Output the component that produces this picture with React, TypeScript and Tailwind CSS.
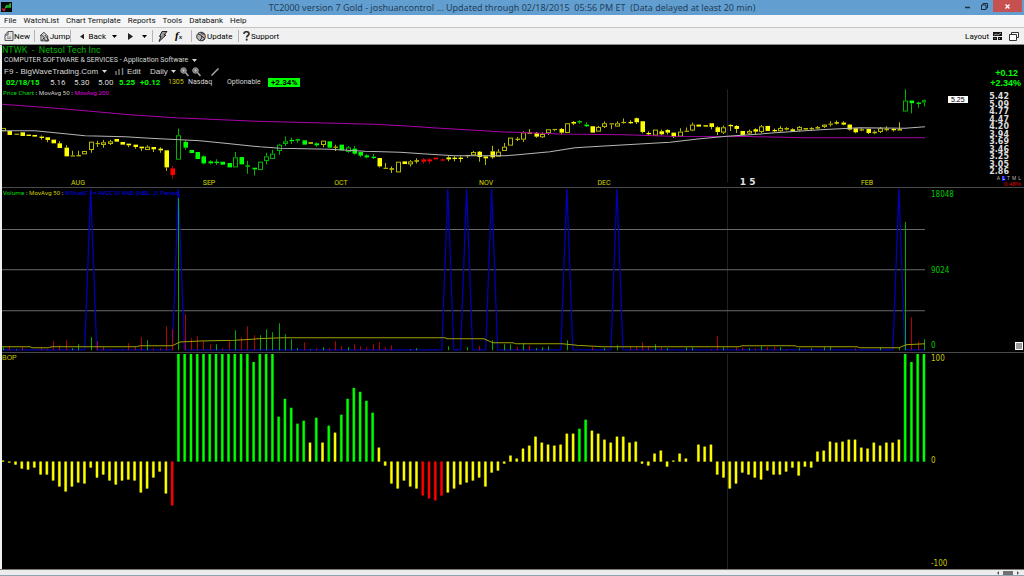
import React from "react";

const STEP = 6.265;
const barX = (i: number) => 3 + i * STEP;

// [kind, body top, body bottom, high, low] in thirds of a pixel; capital letter = filled body
type Candle = [string, number, number, number?, number?];
const candles: Candle[] = [
  ["y", 128, 138], ["Y", 137, 149], ["y", 145, 148], ["Y", 141, 152], ["Y", 148, 152], ["Y", 149, 154],
  ["Y", 154, 158, 151, 163], ["Y", 156, 164, 156, 171], ["Y", 163, 174], ["Y", 174, 188, 168, 188],
  ["Y", 187, 213, 180, 213], ["y", 210, 213, 196, 213], ["y", 209, 213, 196, 213], ["y", 197, 207],
  ["y", 169, 194, 169, 202], ["y", 173, 176, 166, 185], ["y", 171, 179, 164, 187], ["y", 168, 176, 163, 179],
  ["Y", 161, 169], ["Y", 170, 178], ["Y", 175, 180, 175, 186], ["Y", 178, 185, 178, 190], ["Y", 184, 189, 184, 197],
  ["y", 184, 194, 180, 194], ["Y", 185, 192, 185, 200], ["Y", 190, 195, 186, 202], ["Y", 195, 246, 195, 257],
  ["R", 249, 269, 242, 280], ["g", 150, 223, 130, 223], ["G", 170, 187, 165, 193], ["G", 194, 203], ["G", 200, 221],
  ["G", 213, 234, 210, 237], ["G", 228, 234, 225, 237], ["G", 229, 233, 222, 238], ["G", 229, 238], ["G", 233, 246],
  ["g", 216, 246, 200, 246], ["G", 215, 237], ["G", 240, 243, 226, 265], ["G", 247, 252, 247, 270], ["g", 229, 254],
  ["g", 213, 227, 202, 237], ["g", 205, 221, 193, 221], ["g", 178, 197, 175, 208], ["g", 168, 176, 154, 182],
  ["G", 164, 167, 157, 176], ["G", 162, 165, 160, 172], ["G", 165, 178], ["Y", 171, 175], ["G", 174, 180, 171, 184],
  ["y", 166, 179, 166, 186], ["G", 168, 187], ["y", 184, 187, 178, 197], ["G", 178, 195], ["g", 186, 200, 182, 202],
  ["G", 190, 205, 182, 208], ["G", 200, 211, 200, 216], ["G", 210, 216, 206, 219], ["G", 214, 218, 206, 221],
  ["Y", 218, 243, 218, 246], ["y", 247, 249, 233, 251], ["Y", 249, 251, 243, 263], ["y", 229, 261], ["Y", 228, 236],
  ["y", 228, 237, 224, 243], ["Y", 225, 228, 219, 234], ["R", 222, 229, 218, 235], ["R", 222, 228, 218, 234],
  ["R", 217, 222], ["R", 222, 225, 219, 228], ["Y", 216, 222, 210, 228], ["Y", 217, 221, 213, 228], ["Y", 217, 221, 213, 231],
  ["y", 209, 212, 209, 218], ["y", 200, 210, 197, 210], ["Y", 199, 215, 197, 229], ["Y", 213, 219, 213, 239],
  ["Y", 198, 216, 181, 220], ["y", 199, 214, 192, 214], ["y", 184, 197, 173, 197], ["y", 157, 181], ["y", 160, 164, 155, 167],
  ["y", 141, 163, 138, 170], ["y", 141, 146, 132, 146], ["Y", 143, 154, 140, 157], ["y", 146, 156, 141, 158],
  ["y", 132, 144, 132, 149], ["y", 131, 134, 131, 138], ["Y", 131, 142, 128, 148], ["y", 114, 143], ["Y", 110, 115, 108, 120],
  ["G", 108, 111, 105, 116], ["G", 118, 123, 111, 125], ["Y", 123, 142], ["y", 125, 139, 122, 139], ["y", 114, 125, 108, 128],
  ["y", 114, 116, 114, 131], ["y", 114, 124, 108, 124], ["y", 110, 112, 100, 115], ["Y", 110, 114, 105, 116],
  ["Y", 99, 111, 97, 116], ["Y", 108, 140, 108, 144], ["Y", 143, 147, 138, 151], ["y", 133, 151], ["Y", 138, 147, 133, 150],
  ["Y", 134, 142, 132, 148], ["Y", 142, 154, 142, 158], ["y", 139, 154, 129, 154], ["y", 136, 139, 127, 140],
  ["y", 118, 136, 112, 138], ["Y", 118, 124], ["Y", 120, 124], ["Y", 114, 125, 114, 132], ["Y", 126, 140, 123, 149],
  ["y", 126, 142, 121, 146], ["Y", 119, 123, 117, 137], ["Y", 122, 131, 120, 143], ["Y", 137, 149], ["y", 137, 145, 133, 148],
  ["Y", 132, 139, 129, 146], ["y", 123, 140, 119, 143], ["Y", 122, 137], ["Y", 134, 138, 130, 141], ["y", 128, 138, 122, 140],
  ["y", 128, 133, 126, 136], ["Y", 132, 137, 129, 138], ["y", 125, 135, 122, 138], ["Y", 129, 132], ["y", 128, 132, 126, 137],
  ["y", 125, 130, 122, 132], ["y", 118, 125, 116, 128], ["y", 115, 118, 108, 124], ["Y", 111, 115, 106, 118],
  ["Y", 112, 118, 108, 120], ["Y", 118, 133, 116, 136], ["Y", 129, 141, 128, 144], ["y", 132, 136, 129, 138],
  ["Y", 131, 143, 131, 146], ["y", 139, 144, 135, 147], ["y", 129, 140, 125, 143], ["y", 130, 135, 123, 138],
  ["Y", 131, 135, 129, 139], ["y", 131, 136, 111, 136], ["g", 46, 79, 12, 79], ["G", 46, 54, 46, 84], ["G", 52, 56, 50, 68],
  ["g", 45, 52, 43, 63],
];

// Volume bars: index, height, r(ed) or g(reen)
const volumes =
  "0 3 g,1 4 r,2 1 g,3 3 r,6 3 r,7 1 r,8 9 r,9 5 r,10 10 r,11 2 g,12 6 g,14 13 g,15 9 r,16 4 r,17 1 r,19 1 r,20 7 r,21 4 r,22 13 r,23 10 g,24 2 r,25 2 r,26 24 r,27 21 r,28 152 g,29 36 r,30 12 r,31 14 r,32 9 r,33 6 r,34 6 g,35 2 r,36 9 r,37 20 g,38 13 r,39 24 r,40 15 r,41 15 g,42 21 g,43 18 g,44 27 g,45 16 g,46 11 g,47 2 g,48 8 r,49 1 g,50 2 r,51 3 g,52 2 r,53 9 r,54 4 r,55 3 g,56 6 r,57 4 r,58 3 r,59 6 r,60 8 r,61 3 r,62 5 r,65 1 g,66 2 g,71 4 g,74 3 g,76 4 r,78 10 g,80 6 g,81 6 g,82 3 r,83 7 g,84 5 r,85 2 g,86 3 g,87 4 g,90 10 g,94 3 r,96 2 g,98 5 g,100 4 r,101 3 r,102 8 r,103 4 r,104 6 g,105 3 r,106 2 g,109 3 g,110 3 g,113 1 r,114 14 r,115 3 g,117 3 r,118 3 r,119 2 g,120 2 r,121 4 g,122 3 r,123 3 r,124 3 g,125 1 r,127 2 g,129 2 g,131 3 g,132 4 g,136 2 r,140 3 g,143 3 g,144 128 g,145 33 r,146 9 r,147 11 g"
    .split(",")
    .map((s) => s.split(" "));

const bop = [
  1, -1, -3, -7, -8, -6, -13, -13, -19, -25, -30, -25, -21, -22, -6, -16, -13, -19, -23, -19, -18, -19, -31, -27, -16,
  -10, -32, -44, 108, 108, 108, 108, 108, 108, 108, 108, 108, 108, 108, 108, 100, 108, 108, 108, 45, 63, 54, 38, 41, 19,
  44, 19, 36, 29, 47, 63, 74, 70, 61, 49, 14, -4, -22, -27, -19, -25, -27, -34, -37, -39, -34, -31, -27, -23, -21, -19,
  -16, -25, -11, -9, -2, 6, 3, 13, 16, 25, 19, 17, 16, 17, 28, 28, 33, 42, 31, 28, 22, 19, 25, 25, 19, 20, -2, -4, 8, 11,
  -5, 1, 8, 3, 0, 17, 15, 17, -13, -16, -27, -22, -11, -13, -16, -18, -9, -13, -13, -10, -6, -14, -5, -6, 10, 11, 20, 19,
  20, 22, 22, 14, 13, 19, 16, 19, 19, 22, 108, 100, 108, 108,
];
const bopColor = (v: number) => (v >= 32 ? "#00ff00" : v <= -33 ? "#ff0000" : "#ffff00");

const spikes = [14, 28, 71, 74, 78, 90, 98, 143];

const months: [string, number][] = [
  ["AUG", 78], ["SEP", 209], ["OCT", 341], ["NOV", 486], ["DEC", 604], ["FEB", 867],
];

const scale = ["5.42", "5.09", "4.77", "4.47", "4.20", "3.94", "3.69", "3.46", "3.25", "3.05", "2.86"];

function CandleShape({ c, i }: { c: Candle; i: number }) {
  const [kind, t, b, h = t, l = b] = c;
  const x = Math.round(barX(i)) + 0.5;
  const y = (v: number) => 85 + v / 3;
  const k = kind.toLowerCase();
  const solid = kind !== k;
  const bright = k === "y" ? "#ffff00" : k === "g" ? "#00ff00" : "#ff0000";
  const dim = k === "y" ? "#b8b800" : k === "g" ? "#00b400" : "#b40000";
  const top = y(t);
  const height = Math.max(1.2, (b - t) / 3);
  return (
    <g>
      {h < t && <path d={`M${x} ${y(h)}V${top}`} stroke={dim} />}
      {l > b && <path d={`M${x} ${top + height}V${y(l)}`} stroke={dim} />}
      {solid || height < 2 ? (
        <rect x={x - 2} y={top} width="4.5" height={height} fill={solid ? bright : dim} />
      ) : (
        <rect x={x - 2} y={top + 0.5} width="4" height={height - 1} fill="#000" stroke={dim} />
      )}
    </g>
  );
}

function Caret({ className = "" }: { className?: string }) {
  return (
    <svg className={className} width="5" height="3" viewBox="0 0 5 3" aria-hidden="true">
      <path d="M0 0h5L2.500 3z" fill="currentColor" />
    </svg>
  );
}

function Divider() {
  return <span className="h-3 w-px bg-[#b4b4b4]" />;
}

function Magnifier() {
  return (
    <svg width="9" height="10" viewBox="0 0 9 10" aria-hidden="true">
      <circle cx="3.500" cy="3.500" r="2.800" fill="#777" stroke="#999" />
      <path d="M2 3.500h3M3.500 2v3" stroke="#bbb" strokeWidth=".8" />
      <path d="M5.500 5.500 8.500 9" stroke="#aaa" strokeWidth="1.500" />
    </svg>
  );
}

function TitleBar() {
  return (
    <header className="relative flex h-[15px] shrink-0 items-center justify-center bg-[#629fd0] font-['Noto_Sans',sans-serif]">
      <svg className="absolute left-px top-[2px]" width="11" height="10" viewBox="0 0 11 10" aria-hidden="true">
        <rect width="11" height="10" fill="#080808" />
        <path d="M1 6.500 3 8.500 4 6.500" stroke="#d22" strokeWidth="1.500" fill="none" />
        <path d="M4.500 6V4.500L6 3l1 1.500L9.500 1v4.500L7 5z" fill="#1fae2c" stroke="#1fae2c" />
      </svg>
      <h1 className="whitespace-pre text-[9px] leading-[15px] text-[#23405a]">
        TC2000 version 7 Gold - joshuancontrol ... Updated through 02/18/2015{"  "}05:56 PM ET{"  "}(Data delayed at least 20 min)
      </h1>
      <div className="absolute right-[2px] top-0 flex h-3">
        <button aria-label="Minimize" className="flex w-[17px] items-center justify-center">
          <svg width="6" height="8" viewBox="0 0 6 8"><path d="M0 5.500h5" stroke="#1c2c3a" strokeWidth="1.500" /></svg>
        </button>
        <button aria-label="Restore" className="flex w-[17px] items-center justify-center">
          <svg width="7" height="7" viewBox="0 0 7 7" fill="none" stroke="#1c2c3a">
            <path d="M.5 2h4.500v4.500H.5zM2 2V.500h4.500V5H5" />
          </svg>
        </button>
        <button aria-label="Close" className="flex w-[29px] items-center justify-center bg-[#c75050]">
          <svg width="5" height="5" viewBox="0 0 5 5"><path d="M.5.5l4 4m0-4-4 4" stroke="#fff" strokeWidth="1.200" /></svg>
        </button>
      </div>
    </header>
  );
}

function MenuBar() {
  return (
    <nav className="flex h-3 shrink-0 items-center gap-[7px] bg-[#f5f6f7] px-1 font-[Roboto,sans-serif] text-[8px] leading-3 text-[#111]">
      {["File", "WatchList", "Chart Template", "Reports", "Tools", "Databank", "Help"].map((m) => (
        <button key={m}>{m}</button>
      ))}
    </nav>
  );
}

function Toolbar() {
  return (
    <div className="flex h-[18px] shrink-0 items-center border-b border-t border-b-[#8c8c8c] border-t-[#c4c4c4] bg-[#f0f0f0] px-1 font-[Roboto,sans-serif] text-[8px] leading-[15px] text-black">
      <button className="flex w-[30px] items-center">
        <svg width="10" height="10" viewBox="0 0 10 10" fill="#e4e4e4" stroke="#555" aria-hidden="true">
          <path d="M1 9.500V4L4 .500h5v9zM4 .500V4H1" /><path d="M3 6h4M3 7.500h4" strokeWidth=".6" />
        </svg>
        New
      </button>
      <Divider />
      <button className="ml-1 flex w-[31px] items-center">
        <svg width="11" height="11" viewBox="0 0 11 11" aria-hidden="true">
          <path d="M1 5 5 1l4 4v5H2V5" fill="#ccc" stroke="#444" />
          <path d="M2 3.500 6 7M3 10l2-3 2 3M6 4l4 5v1H7" stroke="#333" fill="none" />
        </svg>
        Jump
      </button>
      <Divider />
      <button className="ml-[9px] flex w-[26px] items-center">
        <svg className="mr-[4px]" width="5" height="7" viewBox="0 0 5 7" aria-hidden="true"><path d="M5 0v7L0 3.500z" fill="#222" /></svg>
        Back
      </button>
      <button aria-label="Back history" className="ml-[6px]"><Caret /></button>
      <button aria-label="Forward" className="ml-[11px]">
        <svg width="5" height="7" viewBox="0 0 5 7"><path d="M0 0v7l5-3.500z" fill="#222" /></svg>
      </button>
      <button aria-label="Forward history" className="ml-[9px] mr-[5px]"><Caret /></button>
      <Divider />
      <button aria-label="Alerts" className="ml-[5px]">
        <svg width="10" height="11" viewBox="0 0 10 11"><path d="M4 .500h5L6 4h2L1 10.500l2-5H1.500z" fill="#999" stroke="#222" /></svg>
      </button>
      <button aria-label="Formula" className="ml-[7px] w-[16px] text-left font-['Liberation_Serif',serif] text-[11px] font-bold italic leading-[15px]">
        f<span className="text-[7px]">x</span>
      </button>
      <Divider />
      <button className="ml-1 flex w-[42px] items-center">
        <svg width="11" height="11" viewBox="0 0 11 11" aria-hidden="true">
          <circle cx="5" cy="5.500" r="4.300" fill="#b5b5b5" stroke="#333" />
          <path d="M2 3l3 1 1 3-2 2M5 1l1 2 3 0M6 5l3 3-3 2" stroke="#333" fill="none" />
        </svg>
        Update
      </button>
      <Divider />
      <button className="ml-1 flex items-center gap-px">
        <svg width="7" height="10" viewBox="0 0 7 10" aria-hidden="true">
          <path d="M1 3C1 0 6 0 6 2.800 6 4.500 3.700 4.500 3.700 6.500" fill="none" stroke="#333" strokeWidth="1.800" />
          <circle cx="3.700" cy="8.700" r="1.100" fill="#333" />
        </svg>
        Support
      </button>
      <button className="ml-auto flex items-center gap-1">
        Layout
        <svg width="10" height="10" viewBox="0 0 10 10" aria-hidden="true">
          <path d="M0 1h9v4H0zM0 6h4v3H0zM5 6h4v3H5z" fill="#111" />
          <path d="M1 4l2-1 2 1 3-2M1.500 8l1-1M6 8l1-1" stroke="#ddd" strokeWidth=".7" fill="none" />
        </svg>
      </button>
      <button aria-label="Windows" className="ml-[6px] mr-[1px]">
        <svg width="10" height="9" viewBox="0 0 10 9" fill="#fff" stroke="#333">
          <path d="M2.500.500h7v5h-7z" /><path d="M.5 2.500h7v6h-7z" />
        </svg>
      </button>
    </div>
  );
}

function ChartHeader() {
  return (
    <div className="relative whitespace-nowrap pl-[2px] text-[8px] leading-[11px] text-[#d8d8d8]">
      <h2 className="-ml-[2px] font-[Roboto,sans-serif] text-[9px] leading-[10px] text-[#00b400]">NTWK&nbsp; -&nbsp; Netsol Tech Inc</h2>
      <button className="flex h-[11px] items-center gap-1 leading-[11px]">
        <span className="font-[Roboto,sans-serif] text-[7px]">COMPUTER SOFTWARE &amp; SERVICES - Application Software</span>
        <Caret />
      </button>
      <div className="flex h-[11px] items-center">
        <button className="flex w-[111px] items-center gap-1">F9 - BigWaveTrading.Com <Caret /></button>
        <button className="flex w-[35px] items-center gap-[3px]">
          <svg width="9" height="7" viewBox="0 0 9 7" aria-hidden="true"><path d="M1 3v4M4 1v6M7.500 0v7" stroke="#777" strokeWidth="1.500" /></svg>
          Edit
        </button>
        <button className="flex w-[30px] items-center gap-[3px]">Daily <Caret /></button>
        <button aria-label="Zoom out"><Magnifier /></button>
        <button aria-label="Zoom in" className="ml-[3px]"><Magnifier /></button>
        <button aria-label="Draw line" className="ml-[10px]">
          <svg width="8" height="8" viewBox="0 0 8 8"><path d="M.5 7.500 7.500.500" stroke="#aaa" strokeWidth="1.500" /></svg>
        </button>
      </div>
      <div className="flex h-[11px] items-center font-[Roboto,sans-serif] text-[7px]">
        <span className="w-[46px] pl-[2px] text-[8px] font-bold text-[#00ff00]">02/18/15</span>
        <span className="w-6 text-[8px]">5.16</span>
        <span className="w-6 text-[8px]">5.30</span>
        <span className="w-[21px] text-[8px]">5.00</span>
        <span className="w-[21px] text-[8px] font-bold text-[#00ff00]">5.25</span>
        <span className="w-[28px] text-[8px] font-bold text-[#00ff00]">+0.12</span>
        <span className="w-5 text-[#c8c800]">1305</span>
        <span className="w-[39px]">Nasdaq</span>
        <span className="w-[41px]">Optionable</span>
        <span className="bg-[#00ff00] px-[3px] text-[8px] font-bold leading-[9px] text-black">+2.34%</span>
      </div>
      <div className="-ml-[1px] font-['Noto_Sans',sans-serif] text-[6px] leading-[10px]">
        <span className="text-[#00e000]">Price Chart</span> : MovAvg 50 : <span className="text-[#e000e0]">MovAvg 200</span>
      </div>
    </div>
  );
}

function PricePane() {
  return (
    <section className="flex min-h-0 flex-[143_1_0%] border-b border-[#4a4a4a]">
      <div className="relative min-w-0 flex-1">
        <svg className="absolute inset-0 h-full w-full" viewBox="2 45 924 142" preserveAspectRatio="none" fill="none" aria-label="Price chart">
          <path d="M727.500 89V182" stroke="#222" />
          {candles.map((c, i) => <CandleShape key={i} c={c} i={i} />)}
          <path
            d="M2 104 50 107.500 85 110.500 130 114.500 175 117.500 205 118.700 257 121 295 122 375 124 410 126 440 128 500 131.500 560 133.700 625 134.500 670 136 750 136.300 805 137.500H925"
            stroke="#a800a8"
          />
          <path
            d="M2 130.500H35L60 133 85 135.500 125 136.500 150 138 180 139.500 200 140.500 225 143 260 146.500 280 148 330 149 365 151 400 152 430 154 455 155.500H505L515 154.700 550 151.500 575 147.500 600 146 635 144 670 142 700 138.500 727 136 750 134.500 775 132.500 820 129.500 860 127.500 905 128 925 126.500"
            stroke="#b4b4b4"
          />
        </svg>
        <ChartHeader />
        {months.map(([m, x]) => (
          <span key={m} className="absolute bottom-0 -translate-x-1/2 font-[Roboto,sans-serif] text-[7px] leading-[8px] text-[#d8d800]" style={{ left: `${((x - 2) / 924) * 100}%` }}>
            {m}
          </span>
        ))}
        <span className="absolute bottom-0 left-[80.7%] -translate-x-1/2 whitespace-nowrap font-['DejaVu_Sans',sans-serif] text-[9px] font-bold leading-[10px] text-[#e0e0e0]">1 5</span>
      </div>
      <aside className="flex w-[98px] flex-col items-end pr-[3px] pt-[23px]">
        <strong className="pr-[3px] text-[9px] leading-[10px] text-[#00ff00]">+0.12</strong>
        <strong className="text-[9px] leading-[10px] text-[#00ff00]">+2.34%</strong>
        <div className="mt-[5px] flex w-full items-start justify-between pl-[22px] pr-3">
          <span className="mt-[3px] bg-white px-[3px] text-[7px] leading-[7px] text-black">5.25</span>
          <ol className="flex h-[82px] flex-col justify-between font-['DejaVu_Sans',sans-serif] text-[8px] font-bold leading-[7px] text-[#dcdcdc]">
            {scale.map((s) => <li key={s}>{s}</li>)}
          </ol>
        </div>
        <div className="mt-auto flex gap-[2px] text-[5px] leading-[5px] text-[#bbb]">
          <span>A</span><span className="bg-[#0000ff] text-white">L</span><span>T</span><span>M</span><span>L</span>
        </div>
        <span className="text-[6px] leading-[6px] text-[#e00000]">0.48%</span>
      </aside>
    </section>
  );
}

function VolumePane() {
  return (
    <section className="flex min-h-0 flex-[164_1_0%] border-b border-[#4a4a4a]">
      <div className="relative min-w-0 flex-1">
        <svg className="absolute inset-0 h-full w-full" viewBox="2 188 924 163" preserveAspectRatio="none" fill="none" aria-label="Volume chart">
          <path d="M727.500 189V350" stroke="#222" />
          <path d="M2 229.500H925M2 269.500H925M2 310.500H925" stroke="#6a6a6a" />
          <path
            d={`M2 349.500${spikes.map((i) => `L${barX(i) - 6} 349.500 ${barX(i)} 189 ${barX(i) + 6} 349.500`).join("")}H925`}
            stroke="#0000b4"
            strokeWidth="1.300"
            strokeLinejoin="bevel"
          />
          {volumes.map(([i, h, c]) => (
            <path key={i} d={`M${Math.round(barX(+i)) + 0.5} 350v-${h}`} stroke={c === "r" ? "#b40000" : "#00aa00"} />
          ))}
          <path
            d="M2 346.500H30L32 347.500H48L52 346.500H136L140 345.500H172L180 341.700 200 340.700 235 340 257 338.500 282 337.500H445L447 338.500H484L493 342.500H513L516 343.500H562L577 345 603 346.500H739L742 345.500H795L798 346.500H857L860 347.500H899L906 344.500 925 343.500"
            stroke="#a0a000"
          />
        </svg>
        <p className="relative pl-px font-['Noto_Sans',sans-serif] text-[6px] leading-[10px] text-[#c8c8c8]">
          <span className="text-[#00e000]">Volume</span> : <span className="text-[#d8d800]">MovAvg 50</span> :{" "}
          <span className="text-[#0000ff]">%True(C &gt;= AVGC10 AND (ABS...)1 Period</span>
        </p>
      </div>
      <aside className="flex w-[98px] flex-col justify-between pb-px pl-[5px] pt-[2px] font-['DejaVu_Sans_Condensed','DejaVu_Sans',sans-serif] text-[8px] leading-[10px] text-[#00c800]">
        <span>18048</span>
        <span>9024</span>
        <span className="flex items-center justify-between pr-px">
          0
          <button aria-label="Pane options" className="size-[8px] border border-white bg-[#999]" />
        </span>
      </aside>
    </section>
  );
}

function BopPane() {
  return (
    <section className="flex min-h-0 flex-[217_1_0%]">
      <div className="relative min-w-0 flex-1">
        <svg className="absolute inset-0 h-full w-full" viewBox="2 352 924 217" preserveAspectRatio="none" aria-label="Balance of power chart">
          <path d="M727 353h1V569h-1z" fill="#222" />
          {bop.map((v, i) =>
            v === 0 ? null : (
              <g key={i} fill={bopColor(v)}>
                <rect x={barX(i) - 1.5} y={v > 0 ? 461 - v : 461} width="3" height={Math.abs(v)} opacity=".5" />
                <rect x={barX(i) - 1} y={v > 0 ? 461 - v : 461} width="2" height={Math.abs(v)} />
              </g>
            ),
          )}
        </svg>
        <p className="relative text-[7px] leading-[10px] text-[#c8c800]">BOP</p>
      </div>
      <aside className="flex w-[98px] flex-col justify-between pl-[5px] pt-px font-['DejaVu_Sans_Condensed','DejaVu_Sans',sans-serif] text-[8px] leading-[10px] text-[#c8c800]">
        <span>100</span>
        <span>0</span>
        <span>-100</span>
      </aside>
    </section>
  );
}

export default function App() {
  return (
    <div className="flex h-screen min-h-[480px] flex-col overflow-hidden bg-[#f0f0f0] font-['Liberation_Sans',Arial,sans-serif]">
      <TitleBar />
      <MenuBar />
      <Toolbar />
      <main className="ml-[2px] flex min-h-0 flex-1 flex-col bg-black">
        <PricePane />
        <VolumePane />
        <BopPane />
      </main>
      <footer className="flex h-[7px] shrink-0 items-center justify-end border-b border-t border-b-[#8fa3b0] border-t-[#777] bg-[#ececec] pr-1">
        <button aria-label="Scroll left" className="text-[#555]">
          <svg width="4" height="4" viewBox="0 0 4 4"><path d="M3 0v4L1 2z" fill="currentColor" /></svg>
        </button>
        <span className="mx-[3px] h-1 w-[10px] bg-[#707070]" />
        <button aria-label="Scroll right" className="text-[#555]">
          <svg width="4" height="4" viewBox="0 0 4 4"><path d="M1 0v4l2-2z" fill="currentColor" /></svg>
        </button>
      </footer>
    </div>
  );
}
